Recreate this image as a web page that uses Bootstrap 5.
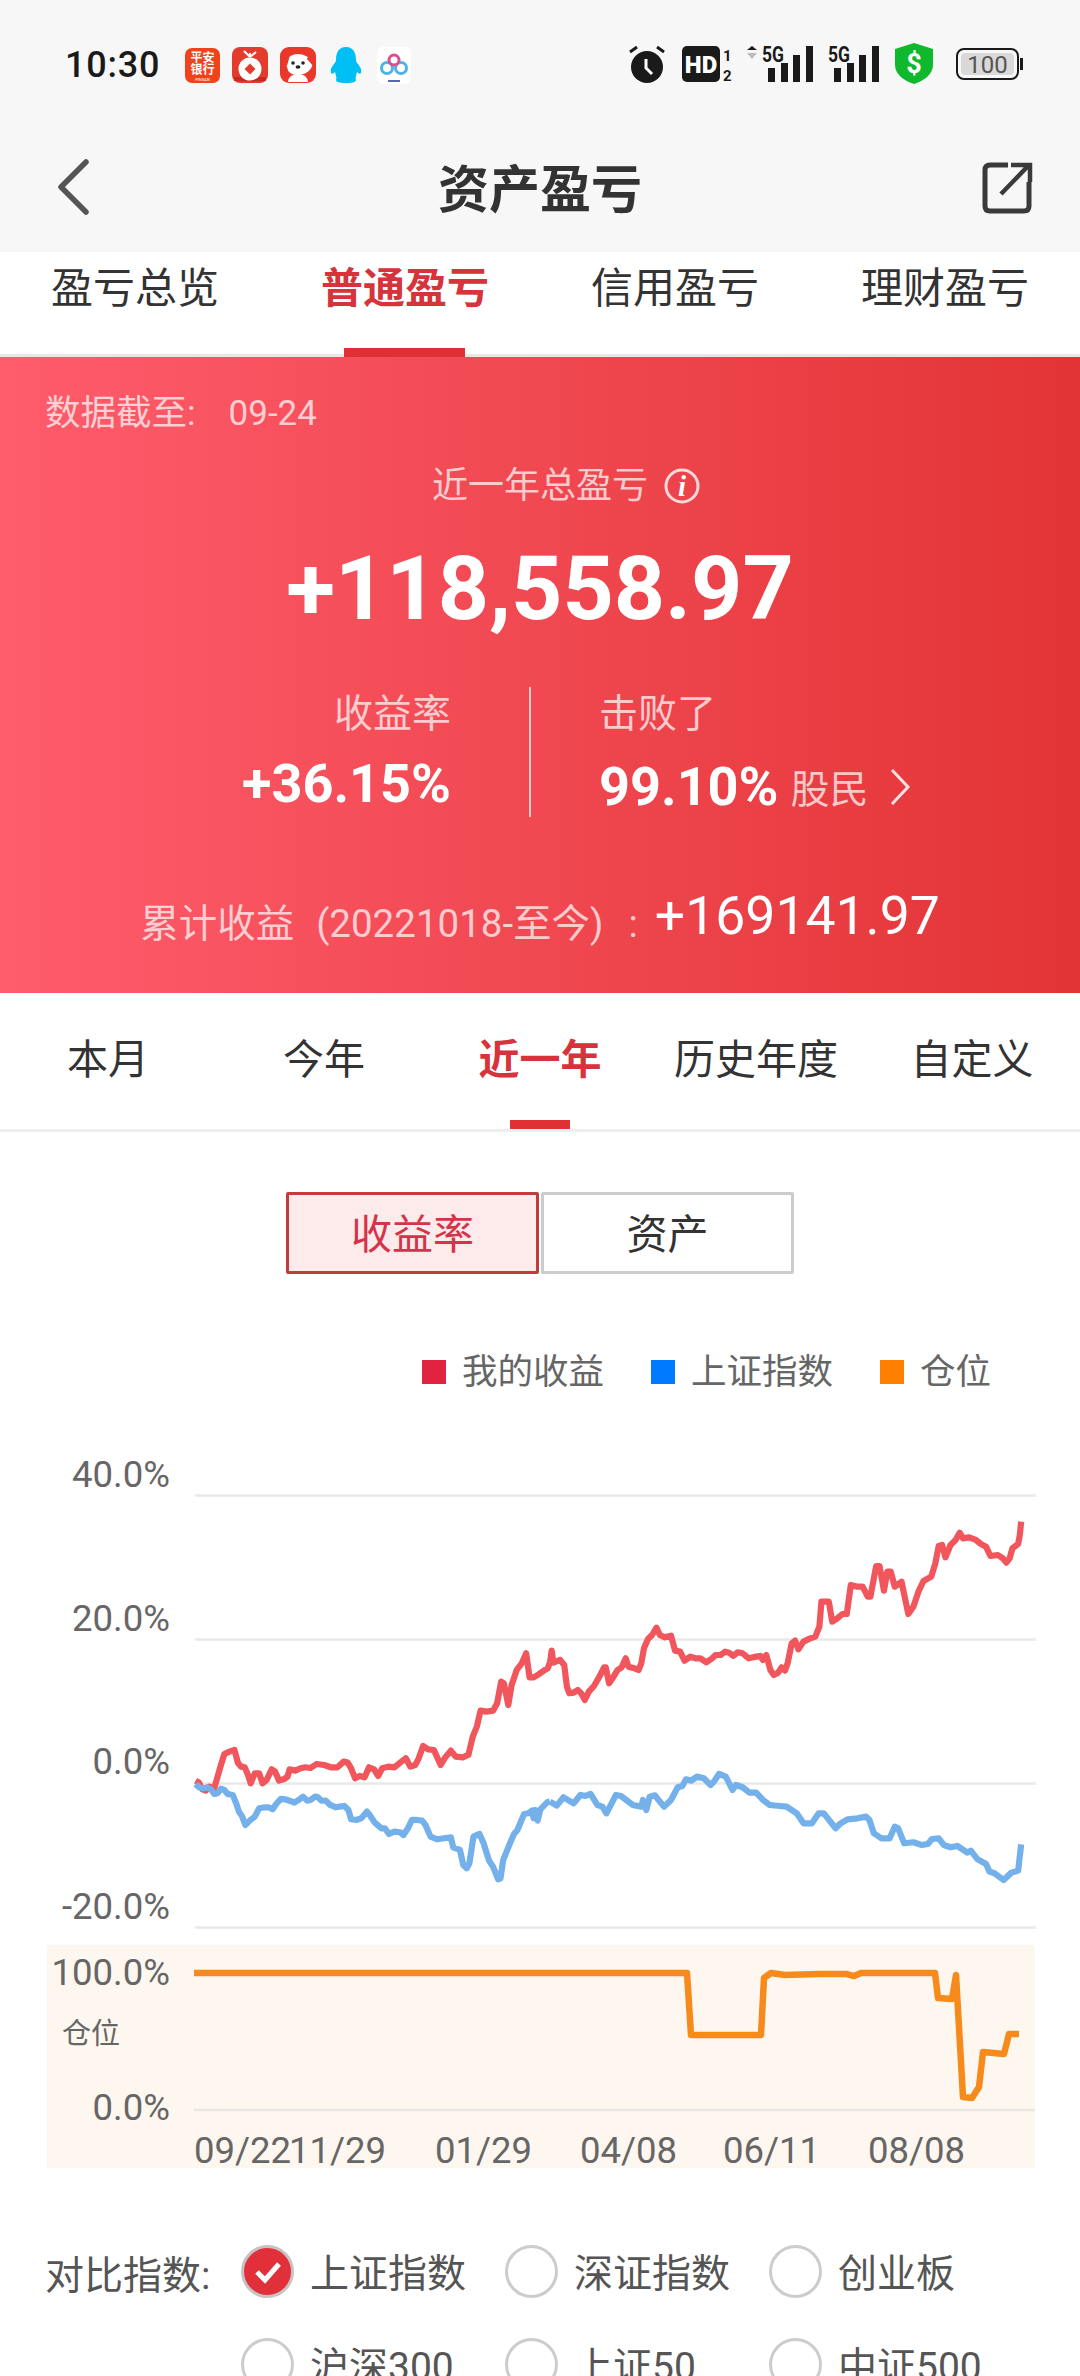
<!DOCTYPE html>
<html lang="zh-CN">
<head>
<meta charset="utf-8">
<title>资产盈亏</title>
<link href="https://cdn.jsdelivr.net/npm/bootstrap@5.3.0/dist/css/bootstrap.min.css" rel="stylesheet">
<style>
html,body{width:1080px;height:2376px;overflow:hidden;background:#fff;margin:0}
body{font-family:Roboto,"Noto Sans CJK SC",sans-serif;color:#333}
.top-zone{height:252px;background:#f7f7f7}
.status-row{height:44px;padding:43px 55px 0 65px;box-sizing:content-box}
.clock-text{width:120px;font-size:36px;font-weight:500;line-height:44px;color:#1a1a1a;letter-spacing:.8px}
.status-apps{gap:12px}
.title-row{height:100px;margin-top:50px;padding:0 47px}
.title-text{font-size:51px;font-weight:700;line-height:100px;color:#333;padding-top:8px}
.tab-bar{border-bottom:3px solid #e9e7e8}
.tab-bar .nav-link{position:relative;padding:0;color:#333;border-radius:0}
.tab-bar .nav-link.active-tab{color:#d6333b;font-weight:700}
.tab-four{height:105px}
.tab-four .nav-link{height:102px;font-size:42px;line-height:60px;padding-top:7px}
.tab-four .active-tab::after{content:"";position:absolute;left:74px;width:121px;height:9px;bottom:-3px;background:#df3033}
.tab-five{height:139px;border-bottom-color:#eee}
.tab-five .nav-link{height:136px;font-size:41px;line-height:60px;padding-top:37px}
.tab-five .active-tab::after{content:"";position:absolute;left:78px;width:60px;height:9px;bottom:0;background:#df3033}
.hero-panel{height:636px;padding-top:32px;color:#fff;background:linear-gradient(90deg,#ff5c6c 0%,#e23436 100%)}
.soft-text{color:rgba(255,255,255,.72)}
.asof-line{padding-left:45px;font-size:35.5px;line-height:48px}
.asof-date{font-size:35px;margin-left:33px}
.total-line{margin-top:24px;padding-left:52px;font-size:36px;line-height:48px;gap:16px}
.amount-text{margin-top:29px;font-size:89.5px;font-weight:700;line-height:100px;text-align:center}
.stats-row{margin-top:48px;height:130px}
.stat-left{width:529px;padding-right:78px;padding-top:2px;text-align:right}
.stat-rule{width:2px;background:rgba(255,255,255,.7)}
.stat-right{padding-left:68px;padding-top:2px}
.stat-label{font-size:39px;line-height:50px}
.stat-value{margin-top:15px;font-size:54px;font-weight:700;line-height:60px}
.stat-unit{font-size:39px;font-weight:400;margin-left:12px;padding-top:6px}
.unit-arrow{margin-left:20px}
.sum-line{margin-top:72px;line-height:60px;font-size:38.5px}
.sum-range{margin-left:22px}
.sum-colon{margin-left:25px}
.sum-value{font-size:53.5px;font-weight:400;color:#fff;margin-left:17px;position:relative;top:-3px}
.seg-row{margin-top:60px;gap:2px}
.seg-btn{width:253px;height:82px;padding:0;font-size:41px;line-height:80px;border:3px solid #ccc;border-radius:2px;color:#333;background:#fff}
.seg-btn.seg-on{border-color:#c23c3c;background:#fdeaea;color:#d6334a}
.legend-row{margin-top:75px;padding-right:89px;height:46px;font-size:35.500px;line-height:46px;color:#666;gap:47px}
.legend-item{gap:16px}
.legend-swatch{width:24px;height:24px}
.chart-canvas{display:block;width:1080px;height:785px}
.chart-canvas text{font-family:Roboto,"Noto Sans CJK SC",sans-serif;fill:#666;font-size:36.5px}
.chart-canvas .side-cap{font-size:29px}
.chart-canvas polyline{fill:none;stroke-linejoin:round;vector-effect:non-scaling-stroke}
.compare-row{margin-top:65px;padding-left:45px;font-size:39px;line-height:53px;color:#555}
.compare-cap{width:196px;color:#555;padding-top:5px}
.compare-opts{width:792px;row-gap:40px}
.compare-opt{width:264px;gap:16px;height:53px}
.opt-name{padding-top:5px}
.radio-dot{width:53px;height:53px;border:3px solid #ccc;flex:none}
.radio-dot.dot-on{background:#e1303a;border-color:#c9c2c2}
</style>
</head>
<body>
<div class="top-zone">
  <div class="status-row d-flex justify-content-between align-items-center">
    <div class="d-flex align-items-center">
      <div class="clock-text">10:30</div>
      <div class="status-apps d-flex align-items-center">
        <svg width="35" height="35" viewBox="0 0 35 35"><rect width="35" height="35" rx="7" fill="#f0431b"/><text text-anchor="middle" font-size="12" font-weight="700" fill="#fff" font-family="Noto Sans CJK SC"><tspan x="17.5" y="14">平安</tspan><tspan x="17.5" y="26">银行</tspan><tspan x="17.5" y="33" font-size="4" font-weight="400" font-family="Roboto">PINGAN</tspan></text></svg>
        <svg width="36" height="36" viewBox="0 0 36 36"><rect width="36" height="36" rx="8" fill="#e43c2c"/><path d="M2 30 L34 30 L34 34 L2 34Z" fill="#c92a1f"/><circle cx="18" cy="22" r="11.5" fill="#fff"/><path d="M18 16.5 L23.5 22 L18 27.5 L12.5 22Z" fill="#e43c2c"/><path d="M18 10 L12 4 M18 10 L24 5 M18 10 L18 6" stroke="#fff" stroke-width="2" fill="none"/></svg>
        <svg width="36" height="36" viewBox="0 0 36 36"><rect width="36" height="36" rx="9" fill="#e9382a"/><path d="M8 35 Q9 27 18 27 Q27 27 28 35Z" fill="#fff"/><path d="M5 13 Q16 3 28 10 L33 16 Q31 27 18 28 Q8 28 7 20Z" fill="#fff"/><path d="M2 8 Q6 4 10 8 L7 19 Q2 15 2 8Z M34 6 L34 20 L27 12 Q29 6 34 6Z" fill="#e9382a"/><circle cx="13" cy="16" r="1.8" fill="#222"/><circle cx="23" cy="16" r="1.8" fill="#222"/><ellipse cx="18" cy="20" rx="2.4" ry="1.7" fill="#222"/></svg>
        <svg width="36" height="36" viewBox="0 0 36 36"><path d="M18 0 C26 0 28 7 28 13 C28 16 31 17 33 22 C34 27 32 28 29 25 C28 29 27 31 28 33 C28 35 25 36 18 36 C11 36 8 35 8 33 C9 31 8 29 7 25 C4 28 2 27 3 22 C5 17 8 16 8 13 C8 7 10 0 18 0Z" fill="#00bff5"/></svg>
        <svg width="36" height="37" viewBox="0 0 36 37"><rect x="1" width="34" height="37" rx="6" fill="#fff"/><circle cx="11" cy="21" r="5.5" fill="none" stroke="#4cb4e8" stroke-width="3"/><circle cx="25" cy="21" r="5.5" fill="none" stroke="#4cb4e8" stroke-width="3"/><circle cx="18" cy="13" r="5" fill="none" stroke="#d9508c" stroke-width="3"/><rect x="12" y="33" width="12" height="2" fill="#5a6ab0"/></svg>
      </div>
    </div>
    <svg width="400" height="44" viewBox="0 0 400 44">
      <circle cx="22" cy="24" r="16" fill="#1a1a1a"/><path d="M5 9 L12 4 M32 4 L39 9" stroke="#1a1a1a" stroke-width="3" fill="none"/><path d="M21 16 V25 L27 31" stroke="#fff" stroke-width="3" fill="none"/>
      <rect x="57" y="3" width="38" height="36" rx="5" fill="#1a1a1a"/><text x="76" y="30" text-anchor="middle" font-family="Roboto" font-weight="900" font-size="24" fill="#fff">HD</text>
      <text x="98" y="18" font-family="Roboto" font-weight="700" font-size="15" fill="#1a1a1a">1</text><text x="98" y="38" font-family="Roboto" font-weight="700" font-size="15" fill="#1a1a1a">2</text>
      <path d="M122 7 L127 3 L132 7Z" fill="#1a1a1a"/><path d="M122 10 H132 L127 16Z" fill="#bbb"/>
      <text x="137" y="19" font-family="Roboto" font-weight="700" font-size="22" textLength="22" lengthAdjust="spacingAndGlyphs" fill="#1a1a1a">5G</text>
      <rect x="143" y="25" width="7" height="14" fill="#1a1a1a"/><rect x="156" y="20" width="7" height="19" fill="#1a1a1a"/><rect x="168" y="12" width="7" height="27" fill="#1a1a1a"/><rect x="181" y="3" width="7" height="36" fill="#1a1a1a"/>
      <text x="203" y="19" font-family="Roboto" font-weight="700" font-size="22" textLength="22" lengthAdjust="spacingAndGlyphs" fill="#1a1a1a">5G</text>
      <rect x="209" y="25" width="7" height="14" fill="#1a1a1a"/><rect x="222" y="20" width="7" height="19" fill="#1a1a1a"/><rect x="234" y="12" width="7" height="27" fill="#1a1a1a"/><rect x="247" y="3" width="7" height="36" fill="#1a1a1a"/>
      <path d="M289 0 L308 6 V22 C308 32 298 38 289 41 C280 38 270 32 270 22 V6Z" fill="#0fb82c"/><text x="289" y="30" text-anchor="middle" font-family="Roboto" font-weight="700" font-size="27" fill="#fff">$</text>
      <rect x="332" y="6" width="61" height="30" rx="7" fill="none" stroke="#1a1a1a" stroke-width="2"/><rect x="336" y="10" width="53" height="22" rx="4" fill="#d9d9d9"/><text x="362.500" y="30" text-anchor="middle" font-family="Roboto" font-size="24" fill="#555">100</text><rect x="395" y="15" width="3" height="12" fill="#1a1a1a"/>
    </svg>
  </div>
  <div class="title-row d-flex justify-content-between align-items-center">
    <svg width="56" height="60" viewBox="0 0 56 60"><path d="M39 5 L14 30 L39 55" fill="none" stroke="#555" stroke-width="5.500" stroke-linecap="round" stroke-linejoin="round"/></svg>
    <div class="title-text">资产盈亏</div>
    <svg width="56" height="60" viewBox="0 0 56 60"><path d="M31 8 H13 Q8 8 8 13 V49 Q8 54 13 54 H47 Q52 54 52 49 V25" fill="none" stroke="#3a3a3a" stroke-width="5"/><path d="M24 37 L51 9 M34 8 H53 V25" fill="none" stroke="#3a3a3a" stroke-width="4.500"/></svg>
  </div>
</div>

<nav class="nav nav-justified tab-bar tab-four">
  <a class="nav-link" href="#">盈亏总览</a>
  <a class="nav-link active-tab" href="#">普通盈亏</a>
  <a class="nav-link" href="#">信用盈亏</a>
  <a class="nav-link" href="#">理财盈亏</a>
</nav>

<section class="hero-panel">
  <div class="asof-line soft-text">数据截至:<span class="asof-date">09-24</span></div>
  <div class="total-line soft-text d-flex justify-content-center align-items-center">
    <span>近一年总盈亏</span>
    <svg width="36" height="36" viewBox="0 0 36 36"><circle cx="18" cy="18" r="16" fill="none" stroke="#fff" stroke-opacity=".8" stroke-width="3"/><text x="18" y="28" text-anchor="middle" font-family="Liberation Serif" font-weight="700" font-style="italic" font-size="29" fill="#fff">i</text></svg>
  </div>
  <div class="amount-text">+118,558.97</div>
  <div class="stats-row d-flex">
    <div class="stat-left">
      <div class="stat-label soft-text">收益率</div>
      <div class="stat-value">+36.15%</div>
    </div>
    <div class="stat-rule"></div>
    <div class="stat-right">
      <div class="stat-label soft-text">击败了</div>
      <div class="stat-value d-flex align-items-center">99.10%<span class="stat-unit soft-text">股民</span>
        <svg class="unit-arrow" width="22" height="38" viewBox="0 0 22 38"><path d="M3 2 L19 19 L3 36" fill="none" stroke="#fff" stroke-opacity=".85" stroke-width="3"/></svg>
      </div>
    </div>
  </div>
  <div class="sum-line soft-text d-flex justify-content-center align-items-baseline">
    <span>累计收益</span><span class="sum-range">(20221018-至今)</span><span class="sum-colon">:</span><span class="sum-value">+169141.97</span>
  </div>
</section>

<nav class="nav nav-justified tab-bar tab-five">
  <a class="nav-link" href="#">本月</a>
  <a class="nav-link" href="#">今年</a>
  <a class="nav-link active-tab" href="#">近一年</a>
  <a class="nav-link" href="#">历史年度</a>
  <a class="nav-link" href="#">自定义</a>
</nav>

<div class="seg-row d-flex justify-content-center">
  <button type="button" class="btn seg-btn seg-on">收益率</button>
  <button type="button" class="btn seg-btn">资产</button>
</div>

<div class="legend-row d-flex justify-content-end">
  <div class="legend-item d-flex align-items-center"><span class="legend-swatch" style="background:#e0233f"></span>我的收益</div>
  <div class="legend-item d-flex align-items-center"><span class="legend-swatch" style="background:#007aff"></span>上证指数</div>
  <div class="legend-item d-flex align-items-center"><span class="legend-swatch" style="background:#ff8000"></span>仓位</div>
</div>

<svg class="chart-canvas" viewBox="0 1395 1080 785">
  <rect x="47" y="1945" width="988" height="223" fill="#fef7f0"/>
  <g stroke="#e9e9e9" stroke-width="2.500">
    <line x1="195" y1="1495.500" x2="1036" y2="1495.500"/>
    <line x1="195" y1="1639.500" x2="1036" y2="1639.500"/>
    <line x1="195" y1="1783.500" x2="1036" y2="1783.500"/>
    <line x1="195" y1="1927.500" x2="1036" y2="1927.500"/>
    <line x1="194" y1="2110" x2="1035" y2="2110" stroke="#ebe6e1"/>
  </g>
  <g text-anchor="end">
    <text x="170" y="1487">40.0%</text>
    <text x="170" y="1631">20.0%</text>
    <text x="170" y="1774">0.0%</text>
    <text x="170" y="1919">-20.0%</text>
    <text x="170" y="1985">100.0%</text>
    <text x="170" y="2120">0.0%</text>
  </g>
  <text class="side-cap" x="62" y="2044">仓位</text>
  <text x="194" y="2163">09/22</text><text x="289" y="2163">11/29</text><text x="435" y="2163">01/29</text><text x="580" y="2163">04/08</text><text x="723" y="2163">06/11</text><text x="868" y="2163">08/08</text>

  <g transform="translate(30,1440) scale(.338,.3333)">
    <polyline stroke="#f0565c" stroke-width="6.200" points="490,1022 500,1028 510,1048 520,1052 530,1040 545,1045 555,1010 565,975 575,942 590,935 605,930 615,968 625,980 635,982 645,1005 653,1030 665,1000 678,1000 688,1030 700,1020 715,988 725,995 737,1022 750,1018 762,1010 768,988 785,992 800,985 815,982 830,984 848,972 870,975 890,982 910,982 928,965 940,968 950,985 962,1015 975,1008 990,1012 1003,982 1018,988 1030,1008 1042,985 1060,980 1078,982 1095,968 1112,955 1125,980 1140,975 1150,955 1163,918 1178,928 1195,930 1215,975 1230,950 1245,932 1260,950 1280,952 1297,945 1310,890 1322,860 1333,812 1350,815 1370,812 1382,790 1394,725 1402,730 1415,795 1425,735 1440,690 1455,670 1468,640 1478,712 1490,712 1505,703 1520,692 1532,685 1538,668"/>
    <polyline stroke="#74b0ea" stroke-width="6.200" points="490,1032 500,1042 512,1045 525,1042 535,1048 545,1062 555,1060 565,1046 575,1050 585,1062 600,1065 610,1090 618,1115 628,1130 637,1155 650,1142 665,1130 678,1105 695,1102 705,1102 718,1108 730,1090 742,1077 755,1078 770,1083 782,1088 795,1080 808,1070 820,1082 830,1080 843,1070 852,1072 862,1082 875,1082 888,1095 905,1102 915,1100 930,1098 942,1110 950,1138 965,1140 980,1135 997,1115 1005,1125 1020,1148 1040,1165 1050,1165 1062,1182 1078,1175 1095,1177 1105,1185 1118,1165 1130,1140 1145,1140 1160,1142 1170,1155 1185,1190 1205,1198 1225,1195 1245,1192 1252,1222 1272,1230 1282,1275 1292,1285 1300,1270 1312,1190 1330,1182 1342,1210 1358,1262 1370,1280 1385,1318 1392,1315 1400,1260 1420,1210 1432,1182 1442,1170 1462,1122 1475,1120 1485,1112 1490,1135 1495,1110 1502,1142 1510,1108 1530,1087 1538,1085"/>
  </g>
  <g transform="translate(550,1440) scale(.338,.3333)">
    <polyline stroke="#f0565c" stroke-width="6.200" points="0,668 5,632 10,668 30,660 42,675 50,740 57,760 70,758 82,750 92,760 103,780 115,755 130,738 145,712 160,682 165,682 175,730 185,715 200,690 212,682 224,655 232,680 250,685 262,690 270,670 278,625 290,597 302,585 315,563 325,585 340,592 358,587 370,632 385,635 398,662 415,650 430,655 445,655 463,667 480,655 490,645 505,645 518,635 530,638 542,648 555,637 570,640 588,655 610,650 622,648 630,660 640,645 652,690 662,705 675,698 685,682 695,692 703,670 715,610 725,602 735,628 750,605 768,596 785,590 797,560 803,485 825,485 835,545 850,535 865,522 878,522 890,435 910,440 925,440 940,470 948,470 965,378 975,378 988,452 998,395 1008,395 1020,440 1040,425 1060,522 1075,500 1090,455 1105,423 1128,410 1140,370 1150,318 1160,315 1170,352 1185,315 1200,300 1212,278 1222,295 1240,292 1260,300 1275,312 1290,320 1303,348 1325,345 1340,355 1350,368 1360,355 1368,325 1385,312 1390,285 1394,245"/>
    <polyline stroke="#74b0ea" stroke-width="6.200" points="0,1085 20,1097 40,1072 70,1090 90,1065 105,1068 120,1062 140,1095 155,1100 167,1120 185,1085 195,1065 210,1068 245,1095 270,1100 275,1080 285,1110 295,1070 310,1066 325,1085 338,1100 358,1080 378,1042 392,1038 402,1018 418,1022 435,1010 455,1015 475,1035 485,1025 500,1002 520,1010 540,1050 550,1035 570,1042 590,1058 610,1058 630,1080 650,1095 680,1098 700,1100 730,1120 750,1150 775,1150 795,1120 810,1120 845,1165 860,1150 880,1138 910,1135 935,1130 945,1140 958,1180 980,1195 1005,1195 1020,1160 1030,1165 1048,1210 1075,1207 1100,1215 1118,1212 1130,1197 1150,1195 1165,1215 1185,1222 1205,1218 1235,1238 1245,1232 1265,1258 1290,1272 1300,1295 1315,1300 1342,1320 1365,1298 1385,1292 1394,1213"/>
  </g>
  <polyline stroke="#f68a1a" stroke-width="6.500" points="194,1973 687,1973 691,2035 761,2035 764,1978 771,1973 785,1975 819,1974 847,1974 854,1976 861,1973 935,1973 938,1998 952,1999 956,1975 963,2097 972,2098 979,2087 983,2052 1004,2054 1009,2034 1019,2034"/>
</svg>

<div class="compare-row d-flex">
  <div class="compare-cap">对比指数:</div>
  <div class="compare-opts d-flex flex-wrap">
    <div class="compare-opt d-flex align-items-center">
      <span class="radio-dot dot-on rounded-circle d-flex align-items-center justify-content-center"><svg width="28" height="24" viewBox="0 0 28 24"><path d="M3 12 L11 20 L25 4" fill="none" stroke="#fff" stroke-width="5"/></svg></span><span class="opt-name">上证指数</span></div>
    <div class="compare-opt d-flex align-items-center"><span class="radio-dot rounded-circle"></span><span class="opt-name">深证指数</span></div>
    <div class="compare-opt d-flex align-items-center"><span class="radio-dot rounded-circle"></span><span class="opt-name">创业板</span></div>
    <div class="compare-opt d-flex align-items-center"><span class="radio-dot rounded-circle"></span><span class="opt-name">沪深300</span></div>
    <div class="compare-opt d-flex align-items-center"><span class="radio-dot rounded-circle"></span><span class="opt-name">上证50</span></div>
    <div class="compare-opt d-flex align-items-center"><span class="radio-dot rounded-circle"></span><span class="opt-name">中证500</span></div>
  </div>
</div>
<script src="https://cdn.jsdelivr.net/npm/bootstrap@5.3.0/dist/js/bootstrap.bundle.min.js"></script>
</body>
</html>
